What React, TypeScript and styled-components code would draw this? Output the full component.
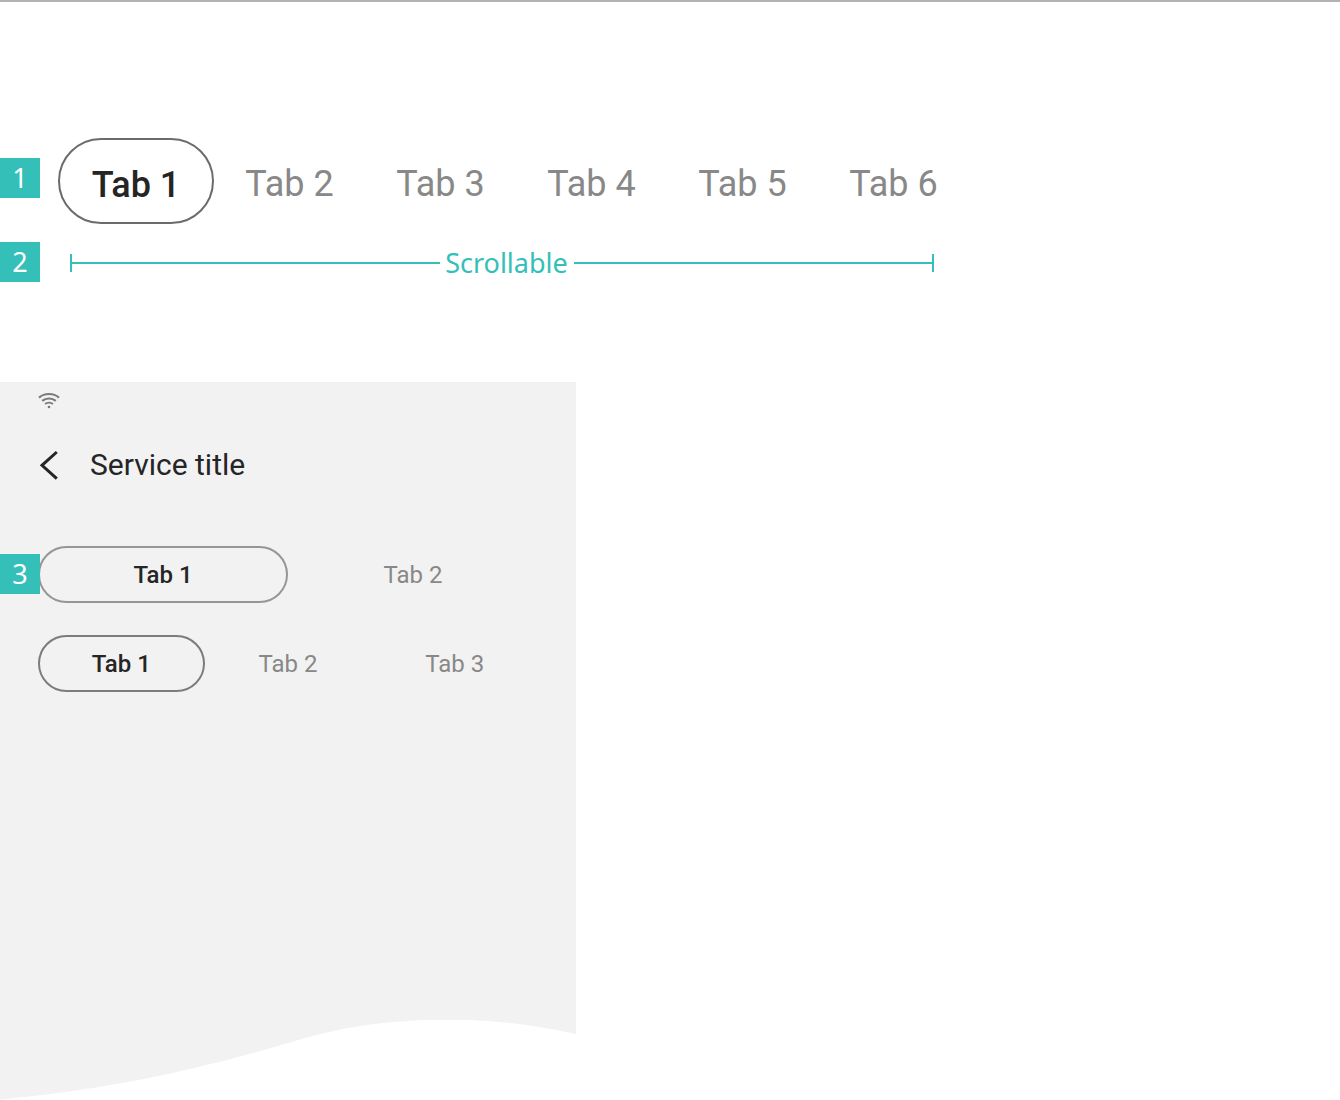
import React, { useState } from "react";
import styled, { createGlobalStyle } from "styled-components";

const teal = "#34c0b9";
const panelGrey = "#f2f2f2";

const GlobalStyle = createGlobalStyle`
  *, *::before, *::after { box-sizing: border-box; }
  body {
    margin: 0;
    background: #fff;
    color: #252525;
    font-family: Roboto, "Liberation Sans", sans-serif;
  }
`;

const Page = styled.main`
  border-top: 2px solid #b2b2b2;
`;

const Guide = styled.section`
  display: flex;
  flex-direction: column;
  gap: 18px;
  padding-top: 136px;
`;

const GuideRow = styled.div`
  display: flex;
  align-items: flex-start;
`;

const Badge = styled.span`
  flex: none;
  width: 40px;
  height: 40px;
  background: ${teal};
  color: #fff;
  font: 400 27px/40px "Noto Sans", sans-serif;
  text-align: center;
`;

const TabsBadge = styled(Badge)`
  margin-top: 20px;
`;

const OverlayBadge = styled(Badge)`
  position: absolute;
  left: 0;
  top: 8px;
`;

const LargeTabs = styled.div`
  display: flex;
  margin-left: 18px;
`;

const LargeTab = styled.button<{ $active: boolean }>`
  height: 86px;
  min-width: ${(p) => (p.$active ? 156 : 151)}px;
  padding: ${(p) => (p.$active ? 8 : 6)}px 0 0;
  border: 2px solid ${(p) => (p.$active ? "#6b6b6b" : "transparent")};
  border-radius: 43px;
  background: none;
  color: ${(p) => (p.$active ? "#252525" : "#888")};
  font: ${(p) => (p.$active ? 500 : 400)} 36px/42px Roboto, sans-serif;
  cursor: pointer;
`;

const Measure = styled.div`
  flex: 0 1 864px;
  display: flex;
  align-items: center;
  height: 42px;
  margin-left: 30px;
  color: ${teal};
  font: 400 27px/40px "Noto Sans", sans-serif;
`;

const MeasureLine = styled.span<{ $side: "left" | "right" }>`
  flex: ${(p) => (p.$side === "left" ? 37 : 36)} 1 0;
  display: flex;
  align-items: center;
  height: 18px;
  border-${(p) => p.$side}: 2px solid ${teal};
  &::before {
    content: "";
    flex: 1;
    height: 2px;
    background: ${teal};
  }
`;

const MeasureLabel = styled.span`
  padding: 0 6px 0 5px;
`;

const Panel = styled.section`
  max-width: 576px;
  margin-top: 98px;
`;

const PanelBody = styled.div`
  padding-bottom: 328px;
  background: ${panelGrey};
`;

const StatusBar = styled.div`
  display: flex;
  height: 36px;
  padding: 10px 38px 0;
`;

const Header = styled.header`
  display: flex;
  align-items: center;
  gap: 30px;
  height: 94px;
  padding: 0 38px;
`;

const BackButton = styled.button`
  display: flex;
  padding: 0;
  border: 0;
  background: none;
  cursor: pointer;
`;

const Title = styled.h1`
  margin: 0;
  font: 400 30px/36px Roboto, sans-serif;
`;

const TabRows = styled.div`
  display: flex;
  flex-direction: column;
  gap: 32px;
  padding-top: 34px;
`;

const TabRow = styled.div`
  position: relative;
  padding: 0 38px;
`;

const EvenTabs = styled.div`
  display: grid;
  grid-auto-flow: column;
  grid-auto-columns: minmax(0, 1fr);
`;

const PanelTab = styled.button<{ $active: boolean; $outline: string }>`
  height: 57px;
  padding: 0;
  border: 2px solid ${(p) => (p.$active ? p.$outline : "transparent")};
  border-radius: 29px;
  background: none;
  color: ${(p) => (p.$active ? "#252525" : "#888")};
  font: ${(p) => (p.$active ? 500 : 400)} 24px/28px Roboto, sans-serif;
  cursor: pointer;
`;

const Wave = styled.svg`
  display: block;
  width: 100%;
`;

function PanelTabs({ count, outline, label }: { count: number; outline: string; label: string }) {
  const [active, setActive] = useState(1);
  return (
    <EvenTabs role="tablist" aria-label={label}>
      {Array.from({ length: count }, (_, i) => i + 1).map((n) => (
        <PanelTab
          key={n}
          role="tab"
          aria-selected={n === active}
          $active={n === active}
          $outline={outline}
          onClick={() => setActive(n)}
        >
          Tab {n}
        </PanelTab>
      ))}
    </EvenTabs>
  );
}

export default function App() {
  const [active, setActive] = useState(1);
  return (
    <>
      <GlobalStyle />
      <Page>
        <Guide>
          <GuideRow>
            <TabsBadge>1</TabsBadge>
            <LargeTabs role="tablist" aria-label="Scrollable tabs">
              {[1, 2, 3, 4, 5, 6].map((n) => (
                <LargeTab
                  key={n}
                  role="tab"
                  aria-selected={n === active}
                  $active={n === active}
                  onClick={() => setActive(n)}
                >
                  Tab {n}
                </LargeTab>
              ))}
            </LargeTabs>
          </GuideRow>
          <GuideRow>
            <Badge>2</Badge>
            <Measure>
              <MeasureLine $side="left" />
              <MeasureLabel>Scrollable</MeasureLabel>
              <MeasureLine $side="right" />
            </Measure>
          </GuideRow>
        </Guide>

        <Panel>
          <PanelBody>
            <StatusBar>
              <svg width="22" height="18" viewBox="0 0 22 18" fill="none" stroke="#7a7a7a" strokeWidth="2.2" aria-hidden="true">
                <path d="M1 5.6C6.5 .8 15.500 .8 21 5.600" />
                <path d="M4.200 8.900C8 5.700 14 5.700 17.800 8.900" />
                <path d="M7.100 12C9.300 10.300 12.700 10.300 14.900 12" />
                <circle cx="11" cy="15" r="1.300" fill="#7a7a7a" stroke="none" />
              </svg>
            </StatusBar>
            <Header>
              <BackButton aria-label="Back">
                <svg width="22" height="32" viewBox="0 0 22 32" fill="none" stroke="#252525" strokeWidth="3">
                  <path d="M18.800 3L4 16.300L18.800 29.600" />
                </svg>
              </BackButton>
              <Title>Service title</Title>
            </Header>
            <TabRows>
              <TabRow>
                <PanelTabs count={2} outline="#969696" label="Two tabs" />
                <OverlayBadge>3</OverlayBadge>
              </TabRow>
              <TabRow>
                <PanelTabs count={3} outline="#7c7c7c" label="Three tabs" />
              </TabRow>
            </TabRows>
          </PanelBody>
          <Wave viewBox="0 0 576 80" aria-hidden="true">
            <path
              fill={panelGrey}
              d="M0 -1H576V14C534 4.500 490 -.5 448 -.5C395 -.5 345 6 300 19.500C200 50 100 71 0 79.500Z"
            />
          </Wave>
        </Panel>
      </Page>
    </>
  );
}
